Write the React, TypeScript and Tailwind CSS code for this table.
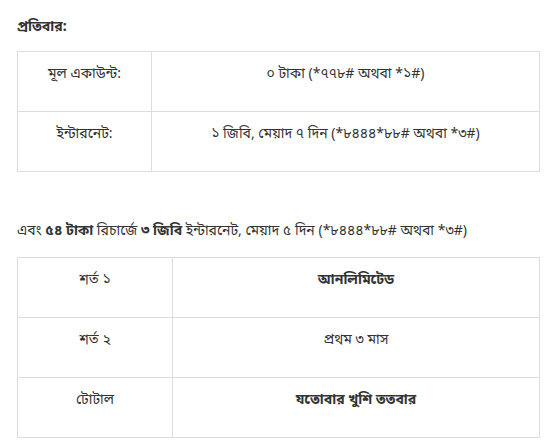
const rows1 = [
  { label: 'মূল একাউন্ট:', value: '০ টাকা (*৭৭৮# অথবা *১#)' },
  { label: 'ইন্টারনেট:', value: '১ জিবি, মেয়াদ ৭ দিন (*৮৪৪৪*৮৮# অথবা *৩#)' },
]

const rows2 = [
  { label: 'শর্ত ১', value: 'আনলিমিটেড', bold: true },
  { label: 'শর্ত ২', value: 'প্রথম ৩ মাস', bold: false },
  { label: 'টোটাল', value: 'যতোবার খুশি ততবার', bold: true },
]

export default function App() {
  return (
    <div
      className="w-[550px] h-[445px] bg-white text-[#333] text-[14px] leading-[20px] px-[17px] pt-[18px]"
      style={{ fontFamily: '"Noto Sans Bengali", "Lohit Bengali", "Noto Sans", "Liberation Sans", sans-serif' }}>
      <p className="font-bold">প্রতিবার:</p>

      <table className="mt-[13px] w-[523px] border-collapse border border-[#ddd]">
        <tbody>
          {rows1.map((r) => (
            <tr key={r.label} className="h-[60px]">
              <td className="w-[134px] border border-[#ddd] text-center align-top pt-[13px]">
                {r.label}
              </td>
              <td className="border border-[#ddd] text-center align-top pt-[13px]">
                {r.value}
              </td>
            </tr>
          ))}
        </tbody>
      </table>

      <p className="mt-[50px]">
        এবং <b>৫৪ টাকা</b> রিচার্জে <b>৩ জিবি</b> ইন্টারনেট, মেয়াদ ৫ দিন (*৮৪৪৪*৮৮# অথবা *৩#)
      </p>

      <table className="mt-[15px] w-[523px] border-collapse border border-[#ddd]">
        <tbody>
          {rows2.map((r) => (
            <tr key={r.label} className="h-[60px]">
              <td className="w-[155px] border border-[#ddd] text-center align-top pt-[13px]">
                {r.label}
              </td>
              <td
                className={
                  'border border-[#ddd] text-center align-top pt-[13px] ' +
                  (r.bold ? 'font-bold' : '')
                }>
                {r.value}
              </td>
            </tr>
          ))}
        </tbody>
      </table>
    </div>
  )
}
